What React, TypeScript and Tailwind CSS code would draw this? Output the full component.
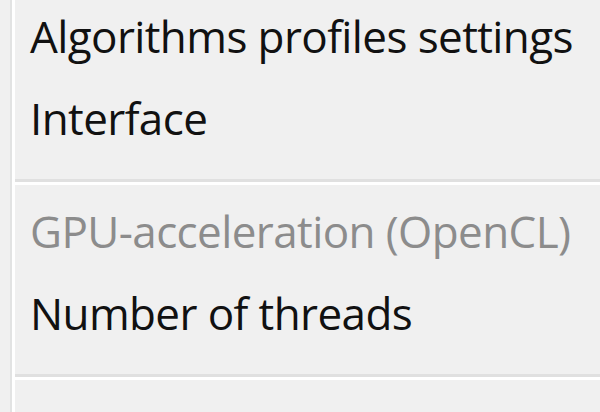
const items = [
  { label: 'Algorithms profiles settings' },
  { label: 'Interface' },
  { sep: true },
  { label: 'GPU-acceleration (OpenCL)', disabled: true },
  { label: 'Number of threads' },
  { sep: true },
];

export default function App() {
  return (
    <div
      className="flex h-[412px] w-[600px] overflow-hidden bg-[#f0f0f0]"
      style={{ fontFamily: '"Open Sans", "Noto Sans", sans-serif' }}
    >
      <div className="w-[10px] shrink-0" />
      <div className="w-[2px] shrink-0 bg-[#e2e3e3]" />
      <div className="w-[3px] shrink-0 bg-white" />
      <div className="-mt-[5px] flex flex-1 flex-col">
        {items.map((item, i) =>
          item.sep ? (
            <div key={i} className="flex flex-col pt-[20px] pb-[5px]">
              <div className="h-[3px] bg-[#e0e0e0]" />
              <div className="h-[3px] bg-white" />
            </div>
          ) : (
            <div
              key={i}
              className={
                'h-[82px] whitespace-nowrap pl-[15px] text-[44px] font-medium leading-[82px] tracking-[-0.6px] ' +
                (item.disabled ? 'text-[#8c8c8c]' : 'text-[#111]')
              }
            >
              {item.label}
            </div>
          ),
        )}
      </div>
    </div>
  );
}
